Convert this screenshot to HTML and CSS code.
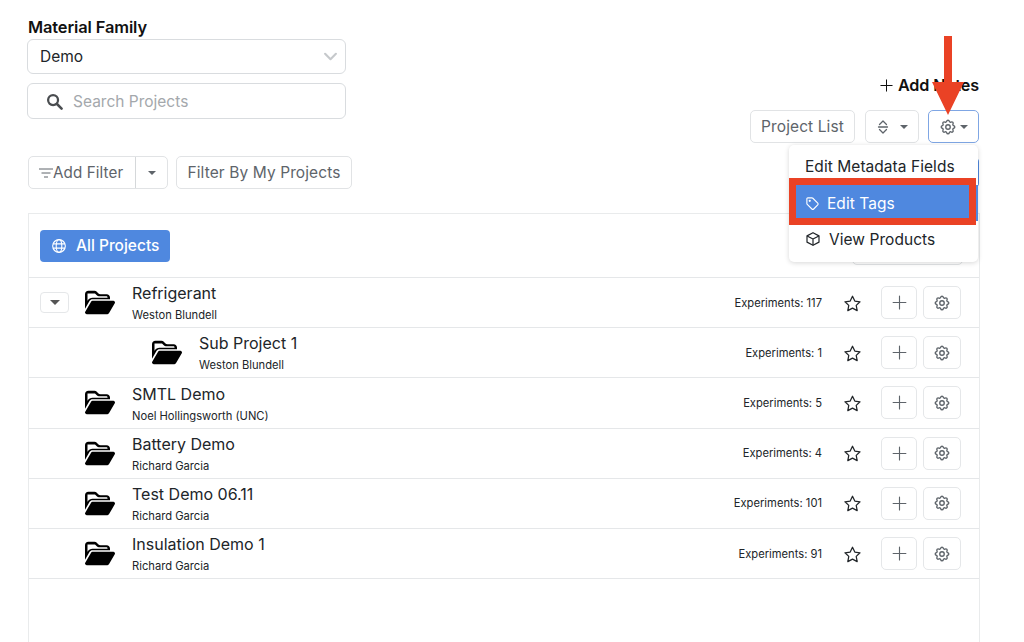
FILE: index.html
```html
<!DOCTYPE html>
<html lang="en">
<head>
<meta charset="utf-8">
<title>Projects</title>
<link rel="stylesheet" href="styles.css">
</head>
<body>
<svg class="defs" width="0" height="0" aria-hidden="true">
  <defs>
    <symbol id="folder" viewBox="0 0 576 512"><path fill="currentColor" d="M88.7 223.8L0 375.8V96C0 60.7 28.7 32 64 32H181.5c17 0 33.3 6.7 45.3 18.7l26.5 26.5c12 12 28.3 18.7 45.3 18.7H416c35.3 0 64 28.7 64 64v32H144c-22.8 0-43.8 12.1-55.3 31.8zm27.6 16.1C122.1 230 132.6 224 144 224H544c11.5 0 22 6.1 27.7 16.1s5.7 22.2-.1 32.1l-112 192C453.9 474 443.4 480 432 480H32c-11.5 0-22-6.1-27.7-16.1s-5.7-22.2 .1-32.1l112-192z"/><path fill="#fff" d="M48 82h133c6 0 12 3 16 7l34 34c9 9 21 14 34 14h151c9 0 16 7 16 16v12H144c-40 0-72 20-90 50L48 226z"/></symbol>
    <symbol id="gear" viewBox="0 0 24 24"><g fill="none" stroke="currentColor" stroke-width="1.8" stroke-linecap="round" stroke-linejoin="round"><path d="M10.3 4.3c.4-1.8 3-1.8 3.4 0a1.7 1.7 0 0 0 2.6 1.1c1.5-.9 3.3.8 2.4 2.4a1.7 1.7 0 0 0 1 2.5c1.8.4 1.8 3 0 3.4a1.7 1.7 0 0 0-1 2.6c.9 1.5-.9 3.3-2.4 2.4a1.7 1.7 0 0 0-2.6 1c-.4 1.8-3 1.8-3.4 0a1.7 1.7 0 0 0-2.6-1c-1.5.9-3.3-.9-2.4-2.4a1.7 1.7 0 0 0-1-2.6c-1.8-.4-1.8-3 0-3.4a1.7 1.7 0 0 0 1-2.5c-.9-1.6.9-3.3 2.4-2.4a1.7 1.7 0 0 0 2.6-1.1z"/><circle cx="12" cy="12" r="3"/></g></symbol>
    <symbol id="star" viewBox="0 0 24 24"><path fill="none" stroke="currentColor" stroke-width="1.6" stroke-linejoin="round" d="M12 2.8l2.9 6.1 6.6.9-4.8 4.6 1.2 6.6-5.9-3.2-5.9 3.2 1.2-6.6-4.8-4.6 6.6-.9z"/></symbol>
    <symbol id="plus" viewBox="0 0 24 24"><path fill="none" stroke="currentColor" stroke-width="1.6" stroke-linecap="round" d="M12 3v18M3 12h18"/></symbol>
  </defs>
</svg>

<main class="page">
  <div class="top">
    <div class="left-col">
      <div class="field-label">Material Family</div>
      <div class="select">
        <span>Demo</span>
        <svg class="chev" viewBox="0 0 16 10" aria-hidden="true"><path d="M2 2l6 6 6-6" fill="none" stroke="currentColor" stroke-width="2.4" stroke-linecap="round" stroke-linejoin="round"/></svg>
      </div>
      <div class="search">
        <svg class="search-icon" viewBox="0 0 24 24" aria-hidden="true"><circle cx="10" cy="10" r="7" fill="none" stroke="currentColor" stroke-width="3.2"/><path d="M15.5 15.5L22 22" stroke="currentColor" stroke-width="3.6" stroke-linecap="round"/></svg>
        <span>Search Projects</span>
      </div>
    </div>
    <div class="right-col">
      <div class="add-notes"><svg class="notes-plus" aria-hidden="true"><use href="#plus"/></svg><b>Add Notes</b></div>
      <div class="toolbar">
        <div class="btn list-btn">Project List</div>
        <div class="btn sort-btn">
          <svg class="sort-icon" viewBox="0 0 12 16" aria-hidden="true"><path d="M2.5 5.5L6 2l3.5 3.5M2.5 10.5L6 14l3.5-3.5M1.5 8h9" fill="none" stroke="currentColor" stroke-width="1.3" stroke-linecap="round" stroke-linejoin="round"/></svg>
          <i class="caret"></i>
        </div>
        <div class="btn gear-btn">
          <svg class="gear-sm" aria-hidden="true"><use href="#gear"/></svg>
          <i class="caret"></i>
        </div>
      </div>
    </div>
  </div>

  <div class="filters">
    <div class="split">
      <div class="split-main">
        <svg class="filter-icon" viewBox="0 0 14 10" aria-hidden="true"><path d="M0 1h14M2.5 5h9M5 9h4" stroke="currentColor" stroke-width="1"/></svg>Add Filter
      </div>
      <div class="split-caret"><i class="caret"></i></div>
    </div>
    <div class="btn my-btn">Filter By My Projects</div>
  </div>

  <section class="panel">
    <div class="panel-head">
      <div class="all-btn">
        <svg class="globe" viewBox="0 0 24 24" aria-hidden="true"><g fill="none" stroke="currentColor" stroke-width="1.7"><circle cx="12" cy="12" r="9.5"/><ellipse cx="12" cy="12" rx="4.2" ry="9.5"/><path d="M3 8.8h18M3 15.2h18"/></g></svg>
        All Projects
      </div>
    </div>

    <div class="row">
      <div class="toggle"><i class="caret dark"></i></div>
      <svg class="folder" aria-hidden="true"><use href="#folder"/></svg>
      <div class="info"><div class="name">Refrigerant</div><div class="owner">Weston Blundell</div></div>
      <div class="count">Experiments: 117</div>
      <svg class="star" aria-hidden="true"><use href="#star"/></svg>
      <div class="sq"><svg class="ic" aria-hidden="true"><use href="#plus"/></svg></div>
      <div class="sq"><svg class="ic" aria-hidden="true"><use href="#gear"/></svg></div>
    </div>
    <div class="row sub">
      <svg class="folder" aria-hidden="true"><use href="#folder"/></svg>
      <div class="info"><div class="name">Sub Project 1</div><div class="owner">Weston Blundell</div></div>
      <div class="count">Experiments: 1</div>
      <svg class="star" aria-hidden="true"><use href="#star"/></svg>
      <div class="sq"><svg class="ic" aria-hidden="true"><use href="#plus"/></svg></div>
      <div class="sq"><svg class="ic" aria-hidden="true"><use href="#gear"/></svg></div>
    </div>
    <div class="row plain">
      <svg class="folder" aria-hidden="true"><use href="#folder"/></svg>
      <div class="info"><div class="name">SMTL Demo</div><div class="owner">Noel Hollingsworth (UNC)</div></div>
      <div class="count">Experiments: 5</div>
      <svg class="star" aria-hidden="true"><use href="#star"/></svg>
      <div class="sq"><svg class="ic" aria-hidden="true"><use href="#plus"/></svg></div>
      <div class="sq"><svg class="ic" aria-hidden="true"><use href="#gear"/></svg></div>
    </div>
    <div class="row plain">
      <svg class="folder" aria-hidden="true"><use href="#folder"/></svg>
      <div class="info"><div class="name">Battery Demo</div><div class="owner">Richard Garcia</div></div>
      <div class="count">Experiments: 4</div>
      <svg class="star" aria-hidden="true"><use href="#star"/></svg>
      <div class="sq"><svg class="ic" aria-hidden="true"><use href="#plus"/></svg></div>
      <div class="sq"><svg class="ic" aria-hidden="true"><use href="#gear"/></svg></div>
    </div>
    <div class="row plain">
      <svg class="folder" aria-hidden="true"><use href="#folder"/></svg>
      <div class="info"><div class="name">Test Demo 06.11</div><div class="owner">Richard Garcia</div></div>
      <div class="count">Experiments: 101</div>
      <svg class="star" aria-hidden="true"><use href="#star"/></svg>
      <div class="sq"><svg class="ic" aria-hidden="true"><use href="#plus"/></svg></div>
      <div class="sq"><svg class="ic" aria-hidden="true"><use href="#gear"/></svg></div>
    </div>
    <div class="row plain">
      <svg class="folder" aria-hidden="true"><use href="#folder"/></svg>
      <div class="info"><div class="name">Insulation Demo 1</div><div class="owner">Richard Garcia</div></div>
      <div class="count">Experiments: 91</div>
      <svg class="star" aria-hidden="true"><use href="#star"/></svg>
      <div class="sq"><svg class="ic" aria-hidden="true"><use href="#plus"/></svg></div>
      <div class="sq"><svg class="ic" aria-hidden="true"><use href="#gear"/></svg></div>
    </div>
  </section>

  <div class="behind-blue"></div>
  <div class="behind-btn"></div>

  <div class="menu">
    <div class="menu-item">Edit Metadata Fields</div>
    <div class="menu-item active">
      <svg class="menu-ic" viewBox="0 0 24 24" aria-hidden="true"><g fill="none" stroke="currentColor" stroke-width="1.8" stroke-linejoin="round"><path d="M3 4.5c0-.8.7-1.5 1.5-1.5h6.6c.6 0 1.1.2 1.5.6l7.8 7.8c.8.8.8 2.1 0 2.9l-6.5 6.5c-.8.8-2.1.8-2.9 0l-7.4-7.4c-.4-.4-.6-.9-.6-1.5z"/><circle cx="7.6" cy="7.6" r=".9"/></g></svg>
      Edit Tags
    </div>
    <div class="menu-item products">
      <svg class="menu-ic" viewBox="0 0 24 24" aria-hidden="true"><g fill="none" stroke="currentColor" stroke-width="1.8" stroke-linejoin="round"><path d="M12 2.5l9 4.8v9.4l-9 4.8-9-4.8V7.3z"/><path d="M3.2 7.4L12 12l8.8-4.6M12 12v9.3"/></g></svg>
      View Products
    </div>
  </div>
  <div class="highlight"></div>
  <svg class="arrow" viewBox="0 0 32 79" aria-hidden="true"><path fill="#ea4225" d="M12 0h8v46h12L16 79 0 46h12z"/></svg>
</main>
</body>
</html>
```

FILE: styles.css
```css
* { box-sizing: border-box; }
html, body { margin: 0; height: 100%; overflow: hidden; }
body { background: #fff; color: #212529; font-family: Inter, "Liberation Sans", sans-serif; font-size: 16px; }
i { display: block; font-style: normal; }
.defs { position: absolute; }

.page { position: relative; width: 1024px; height: 642px; padding: 18px 44px 0 28px; overflow: hidden; }

.top { display: flex; justify-content: space-between; height: 138px; }
.left-col { width: 319px; margin-left: -1px; }
.field-label { font-size: 16.4px; font-weight: 600; line-height: 19px; color: #111; padding-left: 1px; letter-spacing: -.1px; }
.select { height: 35px; margin-top: 2px; border: 1px solid #d9dcdf; border-radius: 6px; display: flex; align-items: center; justify-content: space-between; padding: 0 7px 0 12px; font-size: 15.5px; color: #212529; }
.chev { width: 15px; height: 9px; color: #c6c9cc; }
.search { height: 36px; margin-top: 9px; border: 1px solid #d9dcdf; border-radius: 6px; display: flex; align-items: center; padding-left: 18px; gap: 10px; font-size: 15.5px; color: #a4a8ac; }
.search-icon { width: 17px; height: 17px; color: #4a4d50; }

.right-col { display: flex; flex-direction: column; align-items: flex-end; padding: 58px 1px 0 0; }
.add-notes { display: flex; align-items: center; height: 18px; font-size: 16.2px; color: #111; gap: 4px; line-height: 18px; }
.add-notes b { font-weight: 600; letter-spacing: -.1px; }
.notes-plus { width: 15px; height: 15px; color: #111; }
.toolbar { display: flex; margin-top: 16px; }

.btn { height: 33px; border: 1px solid #e1e3e5; border-radius: 5px; display: flex; align-items: center; font-size: 15.5px; color: #5e646a; letter-spacing: .1px; }
.list-btn { width: 105px; justify-content: center; margin-right: 10px; }
.sort-btn { width: 54px; padding-left: 11px; gap: 11px; margin-right: 9px; }
.sort-icon { width: 12px; height: 16px; color: #5e646a; }
.gear-btn { width: 51px; padding-left: 10px; gap: 3px; border-color: #7fa6e4; color: #5e646a; }
.gear-sm { width: 18px; height: 18px; }
.caret { width: 0; height: 0; border-left: 4px solid transparent; border-right: 4px solid transparent; border-top: 4px solid #5e646a; }
.caret.dark { border-top-color: #555; border-left-width: 5px; border-right-width: 5px; border-top-width: 5px; }

.filters { display: flex; gap: 8px; height: 33px; }
.split { display: flex; width: 140px; height: 33px; border: 1px solid #e1e3e5; border-radius: 5px; }
.split-main { width: 107px; display: flex; align-items: center; padding-left: 10px; font-size: 15.2px; color: #5e646a; border-right: 1px solid #d5d8da; letter-spacing: .1px; }
.filter-icon { width: 14px; height: 10px; color: #5e646a; }
.split-caret { flex: 1; display: flex; align-items: center; justify-content: center; }
.my-btn { width: 176px; justify-content: center; }

.panel { margin-top: 24px; height: 440px; border: 1px solid #e9ebec; border-bottom: 0; }
.panel-head { height: 64px; padding: 16px 0 0 11px; border-bottom: 1px solid #e5e7e9; }
.all-btn { width: 130px; height: 32px; background: #4f88df; color: #fff; border-radius: 4px; display: flex; align-items: center; padding: 0 0 1px 11px; gap: 9px; font-size: 15.5px; font-weight: 500; }
.globe { width: 16px; height: 16px; }

.row { display: flex; align-items: center; height: 50.2px; border-bottom: 1px solid #e5e7e9; padding-right: 18px; }
.row .toggle { width: 29px; height: 21px; margin-left: 11px; margin-right: 16px; border: 1px solid #e5e7e9; border-radius: 4px; display: flex; align-items: center; justify-content: center; }
.row.plain .folder { margin-left: 56px; }
.row.sub .folder { margin-left: 123px; }
.folder { width: 30px; height: 27px; color: #000; flex: none; margin-right: 17px; }
.info { flex: 1; padding-top: .4px; }
.name { font-size: 16px; line-height: 20px; color: #212529; }
.owner { font-size: 11.2px; line-height: 14px; color: #212529; margin-top: 5px; }
.count { font-size: 11.2px; color: #212529; }
.star { width: 19px; height: 19px; margin: 1px 19px 0 21px; color: #212529; }
.sq { width: 36px; height: 33px; border: 1px solid #e5e7e9; border-radius: 5px; display: flex; align-items: center; justify-content: center; color: #5e646a; }
.sq + .sq { margin-left: 6px; width: 38px; }
.ic { width: 17px; height: 17px; }
.sq + .sq .ic { width: 18px; height: 18px; }

.behind-blue { position: absolute; left: 960px; top: 158px; width: 19px; height: 29px; background: #4f88df; border-radius: 4px; }
.behind-btn { position: absolute; left: 852px; top: 240px; width: 111px; height: 25px; border: 1px solid #e1e3e5; border-radius: 5px; background: #fff; }

.menu { position: absolute; left: 789px; top: 145px; width: 189px; height: 117px; background: #fff; border-radius: 5px; box-shadow: 0 1px 5px rgba(0,0,0,.16); padding-top: 3px; }
.menu-item { height: 36.5px; display: flex; align-items: center; padding-left: 16px; font-size: 15.5px; color: #212529; gap: 7px; white-space: nowrap; letter-spacing: .05px; }
.menu-item.active { background: #4f88df; color: #fff; padding-top: 1px; }
.menu-item.products { gap: 8px; }
.menu-ic { width: 15px; height: 15px; flex: none; }
.menu-item.products .menu-ic { width: 16px; height: 16px; }
.highlight { position: absolute; left: 789px; top: 178px; width: 187px; height: 47px; border: 7px solid #ea4225; }
.arrow { position: absolute; left: 932px; top: 36px; width: 32px; height: 79px; }
```
